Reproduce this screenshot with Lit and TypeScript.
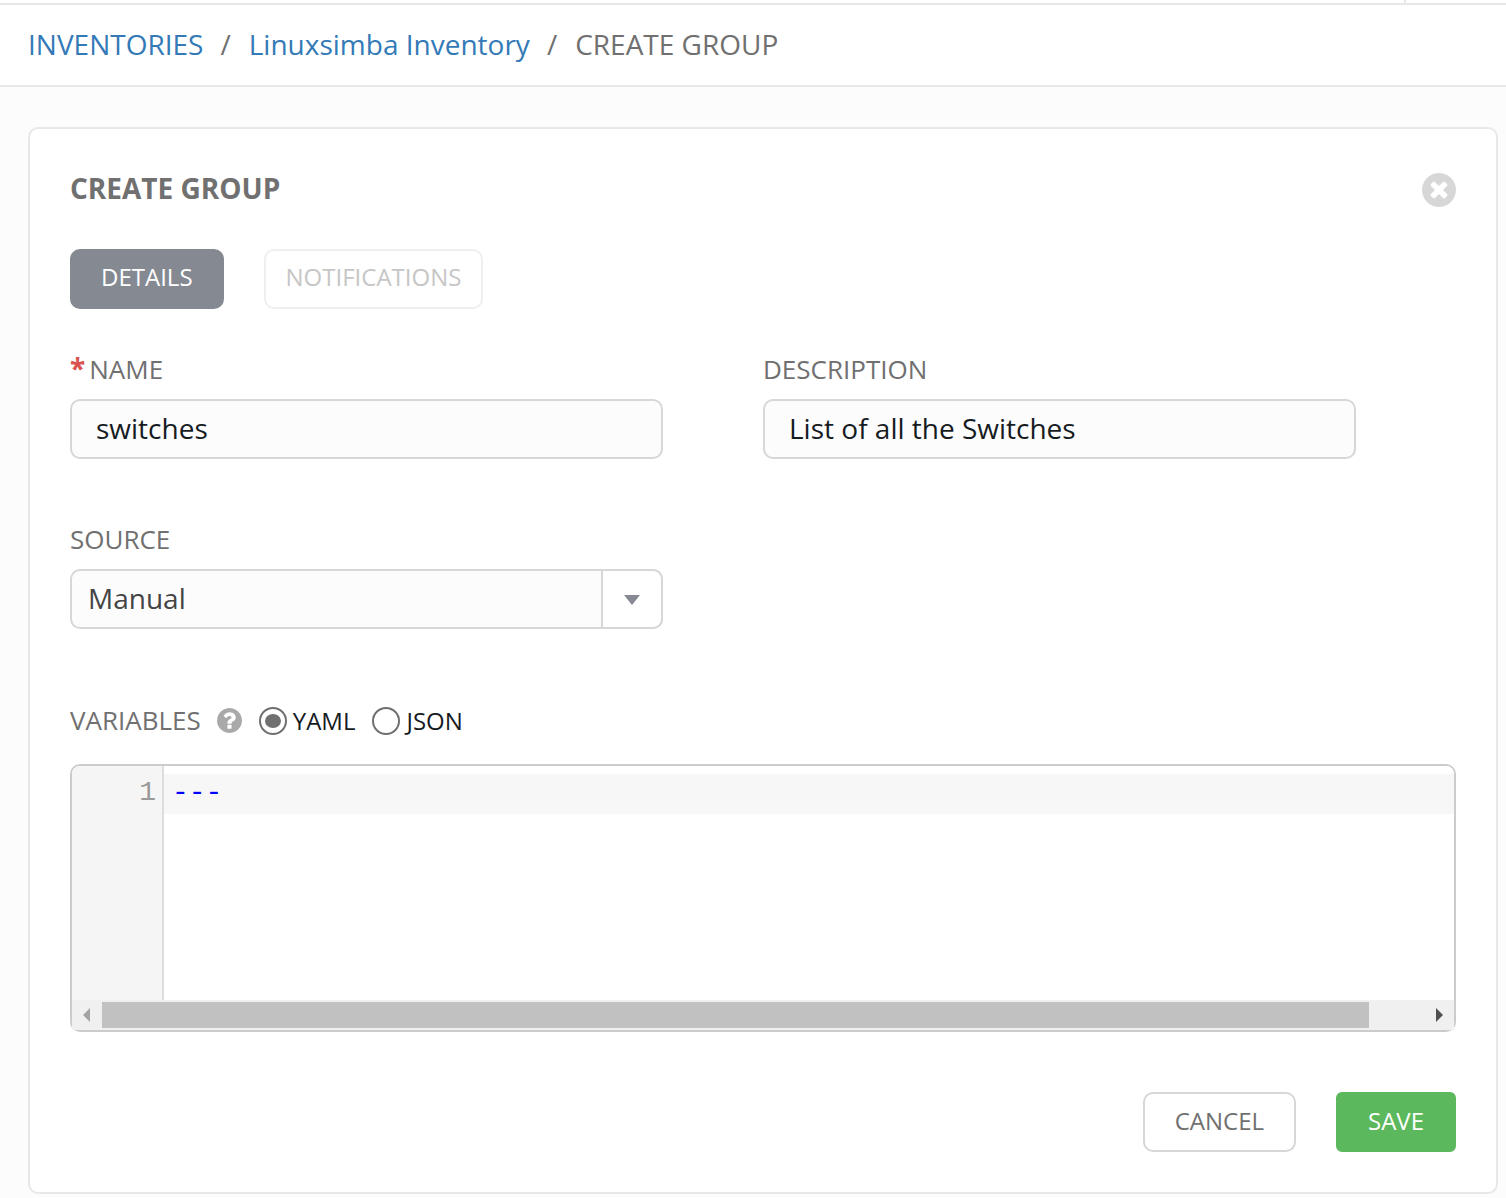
import { LitElement, html, css } from "lit";
import { customElement, state } from "lit/decorators.js";

type Format = "yaml" | "json";

@customElement("app-root")
export class AppRoot extends LitElement {
  @state() private format: Format = "yaml";

  static styles = css`
    :host {
      display: flex;
      flex-direction: column;
      min-height: 100vh;
      box-sizing: border-box;
      background: #fcfcfc;
      color: #707070;
      font-family: "Open Sans", "Noto Sans", sans-serif;
      font-size: 28px;
      line-height: 40px;
    }
    *, *::before, *::after {
      box-sizing: border-box;
    }
    .topbar {
      display: flex;
      justify-content: flex-end;
      height: 5px;
      background: #fff;
      border-bottom: 2px solid #e8e8e8;
    }
    .topbar-cell {
      width: 102px;
      border-left: 2px solid #e8e8e8;
    }
    .crumbs {
      padding: 19px 28px 21px;
      background: #fff;
      border-bottom: 2px solid #e8e8e8;
    }
    .crumb-list {
      display: flex;
      flex-wrap: wrap;
      gap: 0 17px;
      margin: 0;
      padding: 0;
      list-style: none;
    }
    .crumb {
      display: flex;
      gap: 18px;
    }
    .crumb + .crumb::before {
      content: "/";
    }
    .crumb-link {
      color: #337ab7;
      text-decoration: none;
    }
    .card {
      margin: 40px 8px 4px 28px;
      padding: 40px;
      background: #fff;
      border: 2px solid #e8e8e8;
      border-radius: 10px;
    }
    .card-head {
      display: flex;
      align-items: center;
      justify-content: space-between;
    }
    .title {
      margin: 0;
      padding-bottom: 2px;
      font-size: 28px;
      font-weight: 700;
      line-height: 38px;
    }
    .close {
      display: flex;
      padding: 2px 0 0;
      border: 0;
      background: none;
      color: #d7d7d7;
      cursor: pointer;
    }
    .icon-close {
      width: 34px;
      height: 34px;
      fill: currentColor;
    }
    .tabs {
      display: flex;
      gap: 40px;
      margin: 40px 0;
    }
    .btn {
      height: 60px;
      padding: 0 30px 2px;
      border: 2px solid #d7d7d7;
      border-radius: 10px;
      background: #fff;
      color: #707070;
      font-family: inherit;
      font-size: 24px;
      line-height: 34px;
      cursor: pointer;
    }
    .tab {
      padding: 0 29px 4px;
    }
    .tab-active {
      background: #848992;
      border-color: #848992;
      color: #fff;
    }
    .tab-off {
      padding-left: 20px;
      padding-right: 20px;
      border-color: #efefef;
      color: #c6c6c6;
      cursor: default;
    }
    .fields {
      display: grid;
      grid-template-columns: 1fr 1fr;
      row-gap: 60px;
    }
    .field {
      display: flex;
      flex-direction: column;
      gap: 10px;
      padding-right: 100px;
    }
    .label {
      height: 40px;
      font-size: 26px;
    }
    .required {
      margin-right: 4px;
      color: #d9534f;
      font-size: 28px;
      font-weight: 700;
      line-height: 1;
    }
    .input, .select {
      width: 100%;
      height: 60px;
      border: 2px solid #d7d7d7;
      border-radius: 10px;
      background: #fcfcfc;
      font-family: inherit;
      font-size: 28px;
    }
    .input {
      padding: 0 24px 2px;
      color: #161b1f;
    }
    .select-wrap {
      display: grid;
    }
    .select {
      grid-area: 1 / 1;
      appearance: none;
      padding: 0 76px 2px 16px;
      color: #444;
    }
    .select-arrow {
      grid-area: 1 / 1;
      justify-self: end;
      display: flex;
      align-items: center;
      justify-content: center;
      width: 62px;
      padding-top: 2px;
      border: 2px solid #d7d7d7;
      border-radius: 0 10px 10px 0;
      background: #fff;
      pointer-events: none;
    }
    .icon-arrow {
      width: 16px;
      height: 10px;
      fill: #848992;
    }
    .variables {
      display: flex;
      align-items: center;
      height: 40px;
      margin: 71px 0 24px;
    }
    .help {
      display: flex;
      margin: 0 17px 0 16px;
      padding: 0;
      border: 0;
      background: none;
      color: #a9a9a9;
      cursor: pointer;
    }
    .icon-help {
      width: 25px;
      height: 25px;
      fill: currentColor;
    }
    .choice {
      display: flex;
      align-items: center;
      gap: 6px;
      margin-right: 17px;
      padding-top: 2px;
      color: #161b1f;
      font-size: 24px;
    }
    .radio {
      appearance: none;
      display: grid;
      place-items: center;
      width: 28px;
      height: 28px;
      margin: 0;
      border: 2px solid #707070;
      border-radius: 50%;
      background: #fff;
    }
    .radio:checked::before {
      content: "";
      width: 16px;
      height: 14px;
      border-radius: 50%;
      background: #707070;
    }
    .editor {
      border: 2px solid #ccc;
      border-radius: 10px;
      font-family: "Liberation Mono", monospace;
    }
    .editor-body {
      display: flex;
      height: 234px;
    }
    .gutter {
      width: 92px;
      padding: 7px 6px 0 0;
      border-right: 2px solid #ddd;
      border-radius: 8px 0 0 0;
      background: #f5f5f5;
      color: #999;
      text-align: right;
    }
    .code {
      flex: 1;
      min-width: 0;
      padding: 7px 8px 0;
      border: 0;
      border-radius: 0 8px 0 0;
      outline: 0;
      resize: none;
      overflow: hidden;
      background: linear-gradient(#f7f7f7, #f7f7f7) 0 8px / 100% 40px no-repeat #fff;
      color: #00f;
      font: inherit;
      line-height: 40px;
    }
    .scroll {
      display: flex;
      height: 30px;
      background: #f0f0f0;
    }
    .scroll-end {
      display: flex;
      align-items: center;
      justify-content: center;
      width: 30px;
      fill: #a3a3a3;
    }
    .scroll-prev {
      padding-right: 1px;
    }
    .scroll-next {
      fill: #505050;
    }
    .icon-scroll {
      width: 7px;
      height: 14px;
    }
    .scroll-track {
      flex: 1;
      padding: 2px 0;
    }
    .scroll-thumb {
      width: 95.85%;
      height: 100%;
      background: #c1c1c1;
    }
    .actions {
      display: flex;
      justify-content: flex-end;
      gap: 40px;
      margin-top: 60px;
    }
    .save {
      border-color: #5cb85c;
      border-radius: 6px;
      background: #5cb85c;
      color: #fff;
    }
  `;

  private pick(format: Format) {
    this.format = format;
  }

  private choice(format: Format, text: string) {
    return html`
      <label class="choice">
        <input
          class="radio"
          type="radio"
          name="format"
          .checked=${this.format === format}
          @change=${() => this.pick(format)}
        />${text}
      </label>
    `;
  }

  render() {
    return html`
      <div class="topbar"><div class="topbar-cell"></div></div>
      <nav class="crumbs">
        <ol class="crumb-list">
          <li class="crumb"><a class="crumb-link" href="#inventories">INVENTORIES</a></li>
          <li class="crumb"><a class="crumb-link" href="#inventory">Linuxsimba Inventory</a></li>
          <li class="crumb">CREATE GROUP</li>
        </ol>
      </nav>
      <main class="card">
        <header class="card-head">
          <h1 class="title">CREATE GROUP</h1>
          <button class="close" type="button" aria-label="Close">
            <svg class="icon-close" viewBox="128 128 1536 1536" aria-hidden="true">
              <path d="M1277 1122q0-26-19-45l-181-181 181-181q19-19 19-45 0-27-19-46l-90-90q-19-18-46-18-26 0-45 18l-181 181-181-181q-19-18-45-18-27 0-46 18l-90 90q-19 19-19 46 0 26 19 45l181 181-181 181q-19 19-19 45 0 27 19 46l90 90q19 18 46 18 26 0 45-18l181-181 181 181q19 18 45 18 27 0 46-18l90-90q19-19 19-46zm387-226q0 209-103 385.5t-279.5 279.5-385.5 103-385.5-103-279.5-279.5-103-385.5 103-385.5 279.5-279.5 385.5-103 385.5 103 279.5 279.5 103 385.5z" />
            </svg>
          </button>
        </header>
        <div class="tabs">
          <button class="btn tab tab-active" type="button">DETAILS</button>
          <button class="btn tab tab-off" type="button" disabled>NOTIFICATIONS</button>
        </div>
        <form @submit=${(e: Event) => e.preventDefault()}>
          <div class="fields">
            <div class="field">
              <label class="label" for="name"><span class="required">*</span>NAME</label>
              <input class="input" id="name" type="text" value="switches" required />
            </div>
            <div class="field">
              <label class="label" for="description">DESCRIPTION</label>
              <input class="input" id="description" type="text" value="List of all the Switches" />
            </div>
            <div class="field">
              <label class="label" for="source">SOURCE</label>
              <div class="select-wrap">
                <select class="select" id="source">
                  <option>Manual</option>
                </select>
                <span class="select-arrow">
                  <svg class="icon-arrow" viewBox="0 0 16 10" aria-hidden="true"><path d="M0 0h16L8 10z" /></svg>
                </span>
              </div>
            </div>
          </div>
          <div class="variables">
            <label class="label" for="variables">VARIABLES</label>
            <button class="help" type="button" aria-label="Help">
              <svg class="icon-help" viewBox="128 128 1536 1536" aria-hidden="true">
                <path d="M1024 1376v-192q0-14-9-23t-23-9h-192q-14 0-23 9t-9 23v192q0 14 9 23t23 9h192q14 0 23-9t9-23zm256-672q0-88-55.5-163t-138.5-116-170-41q-243 0-371 213-15 24 8 42l132 100q7 6 19 6 16 0 25-12 53-68 86-92 34-24 86-24 48 0 85.5 26t37.5 59q0 38-20 61t-68 45q-63 28-115.5 86.5t-52.5 125.5v36q0 14 9 23t23 9h192q14 0 23-9t9-23q0-19 21.5-49.5t54.5-49.5q32-18 49-28.5t46-35 44.5-48 28-60.5 12.500-81zm384 192q0 209-103 385.5t-279.5 279.5-385.5 103-385.5-103-279.5-279.5-103-385.5 103-385.5 279.5-279.5 385.5-103 385.5 103 279.5 279.5 103 385.5z" />
              </svg>
            </button>
            ${this.choice("yaml", "YAML")} ${this.choice("json", "JSON")}
          </div>
          <div class="editor">
            <div class="editor-body">
              <div class="gutter">1</div>
              <textarea class="code" id="variables" spellcheck="false" .value=${"---"}></textarea>
            </div>
            <div class="scroll" aria-hidden="true">
              <span class="scroll-end scroll-prev">
                <svg class="icon-scroll" viewBox="0 0 7 14"><path d="M7 0v14L0 7z" /></svg>
              </span>
              <div class="scroll-track"><div class="scroll-thumb"></div></div>
              <span class="scroll-end scroll-next">
                <svg class="icon-scroll" viewBox="0 0 7 14"><path d="M0 0v14l7-7z" /></svg>
              </span>
            </div>
          </div>
          <div class="actions">
            <button class="btn" type="button">CANCEL</button>
            <button class="btn save" type="submit">SAVE</button>
          </div>
        </form>
      </main>
    `;
  }
}
